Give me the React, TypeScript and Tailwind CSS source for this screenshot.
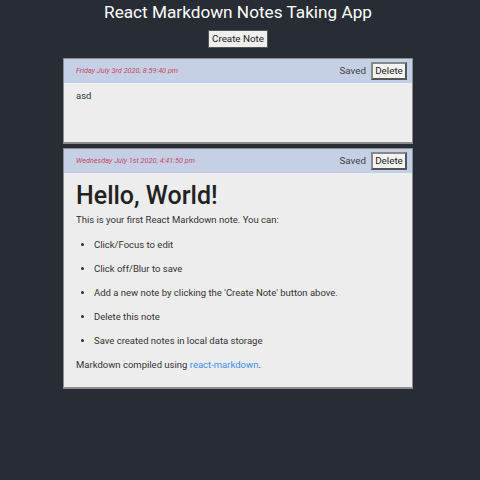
const notes = [
  {
    id: 2,
    date: "Friday July 3rd 2020, 8:59:40 pm",
  },
  {
    id: 1,
    date: "Wednesday July 1st 2020, 4:41:50 pm",
  },
];

const items = [
  "Click/Focus to edit",
  "Click off/Blur to save",
  "Add a new note by clicking the 'Create Note' button above.",
  "Delete this note",
  "Save created notes in local data storage",
];

function NoteHeader({ date }: { date: string }) {
  return (
    <div className="flex h-[24px] items-center justify-between bg-[#c5cfe6] pl-[12px] pr-[5px]">
      <span className="text-[7.3px] italic text-[#c94a5a]">{date}</span>
      <div className="flex items-center gap-[5px]">
        <span className="text-[9.8px] text-[#444]">Saved</span>
        <button className="h-[18px] w-[36px] border-2 border-[#555] border-t-[#888] border-l-[#888] bg-[#f4f4f4] text-[9.8px] leading-none text-[#222]">
          Delete
        </button>
      </div>
    </div>
  );
}

export default function App() {
  return (
    <div
      className="min-h-[480px] bg-[#282c34] pb-10 text-[#333]"
      style={{ fontFamily: 'Roboto, "Noto Sans", sans-serif' }}
    >
      <div className="flex flex-col items-center pr-1">
        <h1 className="text-[17.2px] leading-[24px] text-white">
          React Markdown Notes Taking App
        </h1>
        <button className="mt-[6px] h-[18px] w-[60px] border border-[#555] bg-[#efefef] text-[9.8px] leading-none text-[#222]">
          Create Note
        </button>

        <div className="mt-[10px] w-[350px] border border-b-2 border-[#8c8c8c] bg-[#ededed]">
          <NoteHeader date={notes[0].date} />
          <div className="h-[59px] px-[12px] pt-[5px] text-[9.5px] leading-[15px]">asd</div>
        </div>

        <div className="mt-[4px] w-[350px] border border-b-2 border-[#8c8c8c] bg-[#ededed]">
          <NoteHeader date={notes[1].date} />
          <div className="px-[12px] pb-[15px] pt-[8px] text-[9.5px] leading-[15px]">
            <h2 className="text-[25px] font-medium leading-[30px] text-[#222]">
              Hello, World!
            </h2>
            <p className="mt-[1px]">This is your first React Markdown note. You can:</p>
            <ul className="mt-[10px] list-disc pl-[18px]">
              {items.map((item) => (
                <li key={item} className="mb-[9px]">
                  {item}
                </li>
              ))}
            </ul>
            <p>
              Markdown compiled using{" "}
              <a className="text-[#3b8ef0]" href="#">
                react-markdown
              </a>
              .
            </p>
          </div>
        </div>
      </div>
    </div>
  );
}
